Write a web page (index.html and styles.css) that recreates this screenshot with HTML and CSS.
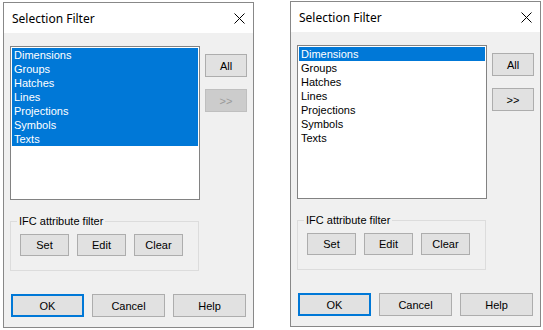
FILE: index.html
```html
<!DOCTYPE html>
<html lang="en">
<head>
    <meta charset="UTF-8">
    <title>Selection Filter</title>
    <link rel="stylesheet" href="styles.css">
</head>
<body>
    <div class="screens">
        <!-- all items selected -->
        <div class="dialog dialog_left">
            <div class="titlebar">
                <span class="title">Selection Filter</span>
                <svg class="close" width="11" height="11" viewBox="0 0 11 11"><path d="M0.5 0.5L10.5 10.5M10.5 0.5L0.5 10.5" stroke="#000" stroke-width="1" fill="none"/></svg>
            </div>
            <div class="body">
                <div class="select_row">
                    <ul class="listbox">
                        <li class="selected">Dimensions</li>
                        <li class="selected">Groups</li>
                        <li class="selected">Hatches</li>
                        <li class="selected">Lines</li>
                        <li class="selected">Projections</li>
                        <li class="selected">Symbols</li>
                        <li class="selected">Texts</li>
                    </ul>
                    <div class="side">
                        <button class="btn btn_side">All</button>
                        <button class="btn btn_side" disabled>&gt;&gt;</button>
                    </div>
                </div>
                <fieldset class="ifc">
                    <legend>IFC attribute filter</legend>
                    <div class="ifc_buttons">
                        <button class="btn btn_small">Set</button>
                        <button class="btn btn_small">Edit</button>
                        <button class="btn btn_small">Clear</button>
                    </div>
                </fieldset>
                <div class="footer">
                    <button class="btn btn_wide btn_default">OK</button>
                    <button class="btn btn_wide">Cancel</button>
                    <button class="btn btn_wide">Help</button>
                </div>
            </div>
        </div>

        <!-- one item selected -->
        <div class="dialog dialog_right">
            <div class="titlebar">
                <span class="title">Selection Filter</span>
                <svg class="close" width="11" height="11" viewBox="0 0 11 11"><path d="M0.5 0.5L10.5 10.5M10.5 0.5L0.5 10.5" stroke="#000" stroke-width="1" fill="none"/></svg>
            </div>
            <div class="body">
                <div class="select_row">
                    <ul class="listbox">
                        <li class="selected">Dimensions</li>
                        <li>Groups</li>
                        <li>Hatches</li>
                        <li>Lines</li>
                        <li>Projections</li>
                        <li>Symbols</li>
                        <li>Texts</li>
                    </ul>
                    <div class="side">
                        <button class="btn btn_side">All</button>
                        <button class="btn btn_side">&gt;&gt;</button>
                    </div>
                </div>
                <fieldset class="ifc">
                    <legend>IFC attribute filter</legend>
                    <div class="ifc_buttons">
                        <button class="btn btn_small">Set</button>
                        <button class="btn btn_small">Edit</button>
                        <button class="btn btn_small">Clear</button>
                    </div>
                </fieldset>
                <div class="footer">
                    <button class="btn btn_wide btn_default">OK</button>
                    <button class="btn btn_wide">Cancel</button>
                    <button class="btn btn_wide">Help</button>
                </div>
            </div>
        </div>
    </div>
</body>
</html>
```

FILE: styles.css
```css
*{
    margin: 0;
    padding: 0;
    box-sizing: border-box;
}
body{
    background: #fff;
    font-family: "Liberation Sans", Arial, sans-serif;
    font-size: 11px;
    color: #000;
}
li{
    list-style: none;
}
.screens{
    display: flex;
    align-items: flex-start;
    gap: 36px;
    padding-left: 3px;
}
.dialog{
    width: 251px;
    height: 326px;
    border: 1px solid #888;
    background: #f0f0f0;
    display: flex;
    flex-direction: column;
}
.dialog_left{
    margin-top: 2px;
}
.dialog_right{
    margin-top: 1px;
}
.titlebar{
    height: 30px;
    background: #fff;
    display: flex;
    align-items: center;
    justify-content: space-between;
    padding: 0 8px 0 8px;
}
.title{
    font-family: "Noto Sans", "Open Sans", sans-serif;
    font-size: 12px;
}
.close{
    display: block;
}
.body{
    padding: 13px 0 0 6px;
}
.select_row{
    display: flex;
    gap: 5px;
}
.listbox{
    width: 190px;
    height: 154px;
    background: #fff;
    border: 1px solid #828282;
    padding: 1px;
}
.listbox li{
    height: 14px;
    line-height: 14px;
    padding-left: 2px;
    white-space: nowrap;
}
.listbox li.selected{
    background: #0078d7;
    color: #fff;
}
.side{
    display: flex;
    flex-direction: column;
    gap: 12px;
    padding-top: 8px;
}
/* 普通按钮 */
.btn{
    font-family: "Liberation Sans", Arial, sans-serif;
    font-size: 11px;
    color: #000;
    background: #e1e1e1;
    border: 1px solid #adadad;
    height: 22px;
    cursor: pointer;
}
.btn:disabled{
    background: #cccccc;
    border-color: #bfbfbf;
    color: #9a9a9a;
    cursor: default;
}
.btn_side{
    width: 42px;
    height: 23px;
}
.btn_small{
    width: 49px;
}
.btn_wide{
    width: 73px;
    height: 23px;
}
.btn_default{
    border: 2px solid #0078d7;
}
.ifc{
    width: 189px;
    margin-top: 15px;
    border: 1px solid #dcdcdc;
    padding: 6px 0 14px 9px;
    display: block;
}
.ifc legend{
    line-height: 13px;
    padding: 0 2px;
    margin-left: -3px;
}
.ifc_buttons{
    display: flex;
    gap: 8px;
}
.footer{
    display: flex;
    gap: 8px;
    margin-top: 23px;
    padding-left: 1px;
}
```
